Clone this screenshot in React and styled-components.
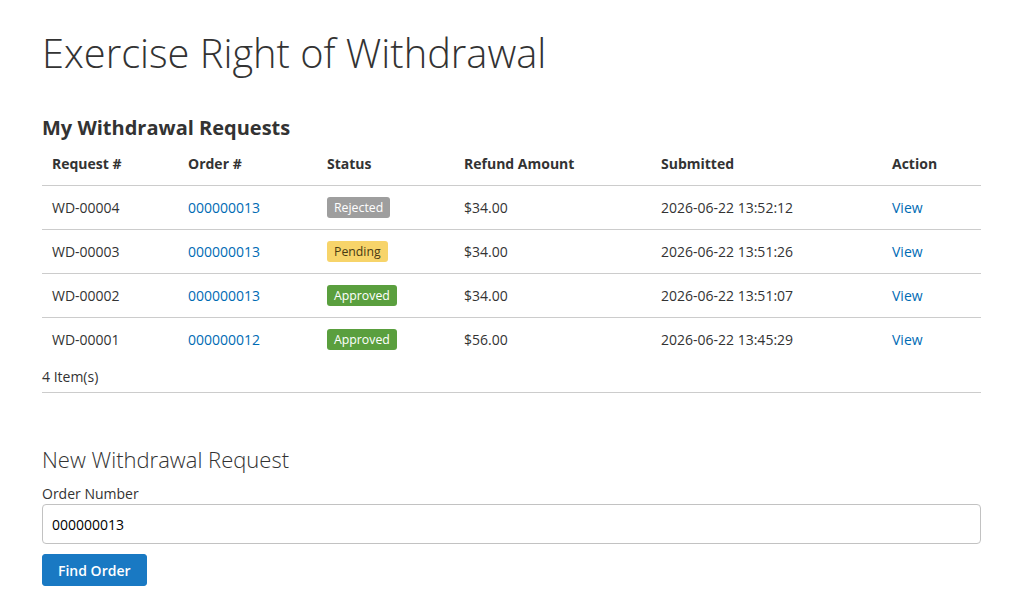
import React from "react";
import styled, { createGlobalStyle } from "styled-components";

const GlobalStyle = createGlobalStyle`
    body {
        margin: 0;
        background: #ffffff;
        font-family: "Open Sans", "Liberation Sans", sans-serif;
        color: #333333;
        font-size: 14px;
    }
`

const Page = styled.div`
    padding: 0 44px 0 42px;
`

const Title = styled.h1`
    font-size: 39.8px;
    font-weight: 300;
    line-height: 44px;
    margin: 31px 0 40px 0;
    color: #333333;
`

const BlockTitle = styled.h2`
    font-size: 20px;
    font-weight: 700;
    line-height: 26px;
    margin: 0 0 6px 0;
`

const Table = styled.table`
    width: 100%;
    border-collapse: collapse;
    table-layout: fixed;
`

const Th = styled.th`
    text-align: left;
    font-size: 14px;
    font-weight: 700;
    padding: 7px 10px 11px 10px;
    line-height: 20px;
    width: ${p => (p.w ? `${p.w - 20}px` : "auto")};
    border-bottom: 1px solid #cccccc;
`

const Td = styled.td`
    padding: 11px 10px 11px 10px;
    line-height: 21px;
    font-size: 14px;
    border-top: 1px solid #cccccc;
    vertical-align: top;
    white-space: nowrap;
`

const Row = styled.tr`
    &:first-child td {
        border-top: none;
    }
`

const Link = styled.a`
    color: #006bb4;
    text-decoration: none;
`

const badgeColors = {
    Rejected: { bg: "#9e9e9e", fg: "#ffffff" },
    Pending: { bg: "#f7d46a", fg: "#4a3b14" },
    Approved: { bg: "#5a9f3e", fg: "#ffffff" },
}

const Badge = styled.span`
    display: inline-block;
    vertical-align: top;
    font-size: 12.3px;
    line-height: 21px;
    height: 21px;
    padding: 0 7px;
    border-radius: 3px;
    background: ${p => badgeColors[p.status].bg};
    color: ${p => badgeColors[p.status].fg};
`

const Toolbar = styled.div`
    font-size: 14px;
    line-height: 18px;
    padding: 7px 0 6px 0;
    border-bottom: 1px solid #cccccc;
`

const FormTitle = styled.h2`
    font-size: 22px;
    font-weight: 300;
    line-height: 28px;
    margin: 52px 0 11px 0;
`

const Label = styled.label`
    display: block;
    font-size: 14px;
    line-height: 20px;
    margin-bottom: 0;
`

const Input = styled.input`
    box-sizing: border-box;
    width: 100%;
    height: 40px;
    border: 1px solid #c2c2c2;
    border-radius: 4px;
    padding: 0 9px;
    font-family: "Open Sans", "Liberation Sans", sans-serif;
    font-size: 14px;
    color: #000000;
    outline: none;
`

const Button = styled.button`
    display: block;
    margin-top: 10px;
    height: 32px;
    padding: 0 15px;
    background: #1979c3;
    border: 1px solid #1979c3;
    border-radius: 3px;
    color: #ffffff;
    font-family: "Open Sans", "Liberation Sans", sans-serif;
    font-size: 14px;
    font-weight: 600;
    cursor: pointer;
`

const rows = [
    { id: "WD-00004", order: "000000013", status: "Rejected", amount: "$34.00", date: "2026-06-22 13:52:12" },
    { id: "WD-00003", order: "000000013", status: "Pending", amount: "$34.00", date: "2026-06-22 13:51:26" },
    { id: "WD-00002", order: "000000013", status: "Approved", amount: "$34.00", date: "2026-06-22 13:51:07" },
    { id: "WD-00001", order: "000000012", status: "Approved", amount: "$56.00", date: "2026-06-22 13:45:29" },
]

const App = () => {
    return (
        <Page>
            <GlobalStyle/>
            <Title>Exercise Right of Withdrawal</Title>
            <BlockTitle>My Withdrawal Requests</BlockTitle>
            <Table>
                <thead>
                    <tr>
                        <Th w={136}>Request #</Th>
                        <Th w={139}>Order #</Th>
                        <Th w={137}>Status</Th>
                        <Th w={197}>Refund Amount</Th>
                        <Th w={231}>Submitted</Th>
                        <Th>Action</Th>
                    </tr>
                </thead>
                <tbody>
                    {rows.map(r => (
                        <Row key={r.id}>
                            <Td>{r.id}</Td>
                            <Td><Link href="#">{r.order}</Link></Td>
                            <Td><Badge status={r.status}>{r.status}</Badge></Td>
                            <Td>{r.amount}</Td>
                            <Td>{r.date}</Td>
                            <Td><Link href="#">View</Link></Td>
                        </Row>
                    ))}
                </tbody>
            </Table>
            <Toolbar>4 Item(s)</Toolbar>

            <FormTitle>New Withdrawal Request</FormTitle>
            <Label>Order Number</Label>
            <Input defaultValue="000000013"/>
            <Button>Find Order</Button>
        </Page>
    )
}

export default App
